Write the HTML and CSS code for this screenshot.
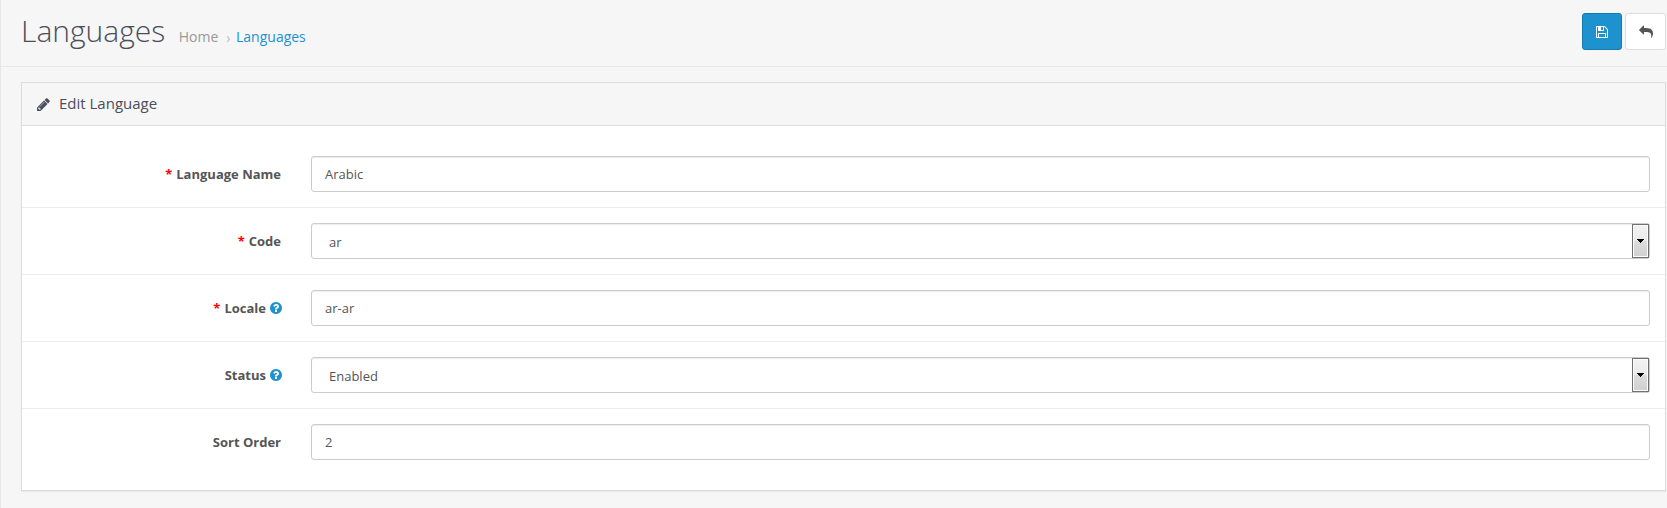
FILE: index.html
```html
<!DOCTYPE html>
<html lang="en">
<head>
<meta charset="utf-8">
<title>Languages</title>
<link rel="stylesheet" href="styles.css">
</head>
<body>
<svg class="sprite" aria-hidden="true">
  <symbol id="pencil" viewBox="0 0 1792 1792"><path d="M491 1536l91-91-235-235-91 91v107h128v128h107zm523-928q0-22-22-22-10 0-17 7l-542 542q-7 7-7 17 0 22 22 22 10 0 17-7l542-542q7-7 7-17zm-54-192l416 416-832 832h-416v-416zm683 96q0 53-37 90l-166 166-416-416 166-165q36-38 90-38 53 0 91 38l235 234q37 39 37 91z"/></symbol>
  <symbol id="save" viewBox="0 0 1792 1792"><path d="M512 1536h768v-384h-768v384zm896 0h128v-896q0-14-10-38.5t-20-34.5l-281-281q-10-10-34-20t-39-10v416q0 40-28 68t-68 28h-576q-40 0-68-28t-28-68v-416h-128v1280h128v-416q0-40 28-68t68-28h832q40 0 68 28t28 68v416zm-384-928v-320q0-13-9.5-22.5t-22.5-9.5h-192q-13 0-22.5 9.5t-9.5 22.5v320q0 13 9.5 22.5t22.5 9.5h192q13 0 22.5-9.5t9.5-22.5zm640 32v928q0 40-28 68t-68 28h-1344q-40 0-68-28t-28-68v-1344q0-40 28-68t68-28h928q40 0 88 20t76 48l280 280q28 28 48 76t20 88z"/></symbol>
  <symbol id="reply" viewBox="0 0 1792 1792"><path d="M1792 1120q0 166-127 451-3 7-10.5 24t-13.5 30-13 22q-12 17-28 17-15 0-23.5-10t-8.5-25q0-9 2.5-26.5t2.5-23.5q5-68 5-123 0-101-17.5-181t-48.5-138.5-80-101-105.5-69.5-133-42.5-154-21.5-175.5-6h-224v256q0 26-19 45t-45 19-45-19l-512-512q-19-19-19-45t19-45l512-512q19-19 45-19t45 19 19 45v256h224q713 0 875 403 53 134 53 333z"/></symbol>
  <symbol id="help" viewBox="0 0 1792 1792"><path d="M1024 1376v-192q0-14-9-23t-23-9h-192q-14 0-23 9t-9 23v192q0 14 9 23t23 9h192q14 0 23-9t9-23zm256-672q0-88-55.5-163t-138.5-116-170-41q-243 0-371 213-15 24 8 42l132 100q7 6 19 6 16 0 25-12 53-68 86-92 34-24 86-24 48 0 85.5 26t37.5 59q0 38-20 61t-68 45q-63 28-115.5 86.5t-52.5 125.5v36q0 14 9 23t23 9h192q14 0 23-9t9-23q0-19 21.5-49.5t54.5-49.5q32-18 49-28.5t46-35 44.5-48 28-60.5 12.5-81zm384 192q0 209-103 385.5t-279.5 279.5-385.5 103-385.5-103-279.5-279.5-103-385.5 103-385.5 279.5-279.5 385.5-103 385.5 103 279.5 279.5 103 385.5z"/></symbol>
</svg>
<main class="content">
  <header class="page-header">
    <h1 class="title">Languages</h1>
    <nav class="breadcrumb"><a class="crumb">Home</a><span class="sep">›</span><a class="crumb current">Languages</a></nav>
    <div class="actions">
      <button class="btn primary" aria-label="Save"><svg class="icon"><use href="#save"/></svg></button>
      <button class="btn" aria-label="Back"><svg class="icon"><use href="#reply"/></svg></button>
    </div>
  </header>
  <section class="panel">
    <h2 class="panel-heading"><svg class="icon-pencil"><use href="#pencil"/></svg><span class="heading-text">Edit Language</span></h2>
    <form class="panel-body">
      <div class="row"><label class="label"><span class="req">*</span>Language Name</label><div class="control">Arabic</div></div>
      <div class="row"><label class="label"><span class="req">*</span>Code</label><div class="control select"><span>ar</span><span class="drop"><svg class="arrow" viewBox="0 0 7 4" shape-rendering="crispEdges"><path d="M0 0h7v1h-1v1h-1v1h-1v1h-1v-1h-1v-1h-1v-1h-1z"/></svg></span></div></div>
      <div class="row"><label class="label"><span class="req">*</span>Locale<svg class="help"><use href="#help"/></svg></label><div class="control">ar-ar</div></div>
      <div class="row"><label class="label">Status<svg class="help"><use href="#help"/></svg></label><div class="control select"><span>Enabled</span><span class="drop"><svg class="arrow" viewBox="0 0 7 4" shape-rendering="crispEdges"><path d="M0 0h7v1h-1v1h-1v1h-1v1h-1v-1h-1v-1h-1v-1h-1z"/></svg></span></div></div>
      <div class="row"><label class="label">Sort Order</label><div class="control">2</div></div>
    </form>
  </section>
</main>
</body>
</html>
```
FILE: styles.css
```css
* { box-sizing: border-box; }
body {
  margin: 0;
  background: #f6f6f6;
  color: #555;
  font: 13px/20px "Open Sans", sans-serif;
}
.sprite { display: none; }
.content { min-height: 508px; border-left: 1px solid #e7e7e7; }
.page-header {
  display: flex;
  align-items: flex-start;
  height: 67px;
  padding: 13px 1px 0 20px;
  border-bottom: 1px solid #e7e7e7;
}
.title {
  margin: 0;
  color: #4c4d5a;
  font-size: 30px;
  font-weight: 300;
  line-height: 36px;
}
.breadcrumb { display: flex; padding: 14px 0 0 13.5px; font-size: 14px; line-height: 20px; }
.crumb { color: #999; }
.sep { padding: 1px 5.5px 0 8px; color: #bbb; }
.crumb.current { color: #1e91cf; }
.actions { display: flex; gap: 3px; margin-left: auto; }
.btn {
  display: flex;
  align-items: center;
  justify-content: center;
  width: 41px;
  height: 37px;
  padding: 0;
  border: 1px solid #ddd;
  border-radius: 3px;
  background: #fff;
  color: #555;
}
.btn.primary { width: 40px; border-color: #1978ab; background: #1e91cf; color: #fff; }
.icon { width: 14px; height: 14px; fill: currentColor; }
.panel {
  margin: 15px 1px 0 20px;
  border: 1px solid #dcdcdc;
  background: #fff;
  box-shadow: 0 1px 1px rgba(0, 0, 0, .05);
}
.panel-heading {
  display: flex;
  align-items: center;
  height: 43px;
  margin: 0;
  padding: 0 14px;
  border-bottom: 1px solid #dcdcdc;
  background: #f6f6f6;
  color: #4c4d5a;
  font-size: 15px;
  font-weight: 400;
}
.heading-text { padding-bottom: 2px; }
.icon-pencil { width: 15px; height: 15px; margin-right: 8px; fill: currentColor; }
.panel-body { padding: 15px; }
.row {
  display: flex;
  height: 67px;
  margin: 0 -15px;
  padding: 15px 15px 0;
  border-bottom: 1px solid #ededed;
}
.row:last-child { height: 66px; border-bottom: 0; }
.label {
  display: flex;
  align-items: center;
  justify-content: flex-end;
  width: 274px;
  height: 36px;
  padding-right: 30px;
  font-weight: 700;
}
.req { margin-right: 4px; color: #f00; }
.help { width: 14px; height: 14px; margin: 0 -2px 0 3px; fill: #1e91cf; }
.control {
  display: flex;
  flex: 1;
  align-items: center;
  height: 36px;
  padding: 0 13px;
  border: 1px solid #ccc;
  border-radius: 3px;
  box-shadow: inset 0 1px 1px rgba(0, 0, 0, .075);
}
.select { justify-content: space-between; padding: 0 0 0 17px; }
.select > span:first-child { padding-top: 2px; }
.drop {
  display: flex;
  align-items: center;
  justify-content: center;
  width: 17px;
  height: 34px;
  border: 1px solid #707070;
  background: linear-gradient(#f2f2f2 0, #ebebeb 50%, #ddd 50%, #cfcfcf 100%);
  box-shadow: inset 0 0 0 1px #fcfcfc;
}
.arrow { width: 7px; height: 4px; fill: #000; }
```
